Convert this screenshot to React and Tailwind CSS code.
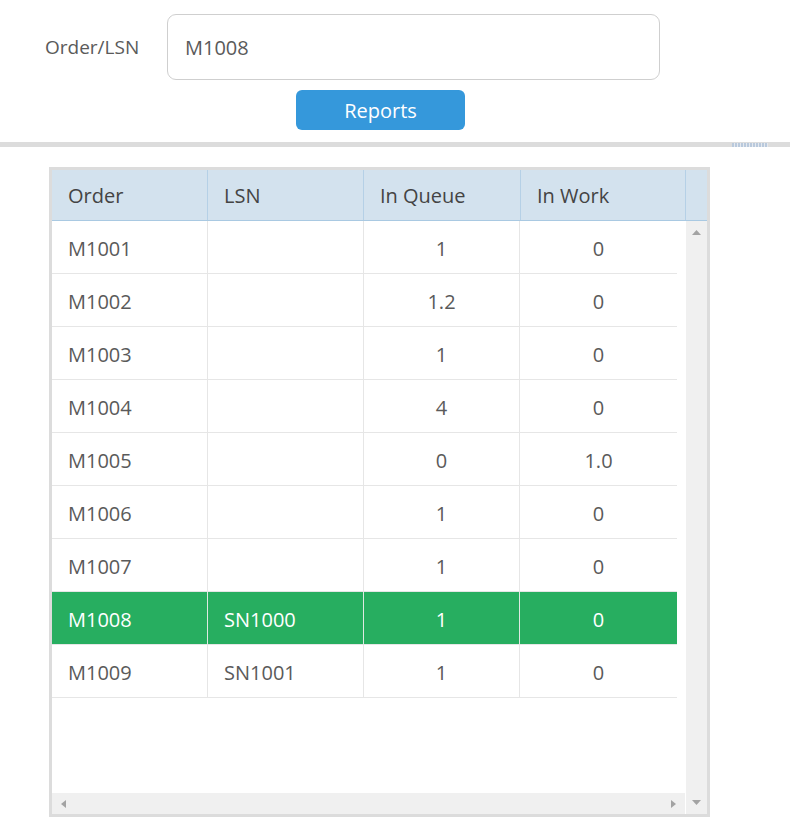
const rows = [
  { order: "M1001", lsn: "", queue: "1", work: "0" },
  { order: "M1002", lsn: "", queue: "1.2", work: "0" },
  { order: "M1003", lsn: "", queue: "1", work: "0" },
  { order: "M1004", lsn: "", queue: "4", work: "0" },
  { order: "M1005", lsn: "", queue: "0", work: "1.0" },
  { order: "M1006", lsn: "", queue: "1", work: "0" },
  { order: "M1007", lsn: "", queue: "1", work: "0" },
  { order: "M1008", lsn: "SN1000", queue: "1", work: "0", selected: true },
  { order: "M1009", lsn: "SN1001", queue: "1", work: "0" },
];

function Row({ row }) {
  const sel = row.selected;
  const cell = sel
    ? "border-r border-[#dfe9e2] h-full flex items-center pt-[3px]"
    : "border-r border-[#e6e6e6] h-full flex items-center pt-[3px]";
  return (
    <div
      className={
        "flex h-[53px] w-[625px] border-b " +
        (sel ? "bg-[#27ae60] text-white border-[#e6e6e6]" : "text-[#5a5a5a] border-[#e6e6e6]")
      }
    >
      <div className={cell + " w-[156px] pl-4"}>{row.order}</div>
      <div className={cell + " w-[156px] pl-4"}>{row.lsn}</div>
      <div className={cell + " w-[156px] justify-center"}>{row.queue}</div>
      <div className="h-full flex items-center justify-center w-[157px] pt-[3px]">{row.work}</div>
    </div>
  );
}

export default function App() {
  return (
    <div
      className="w-[790px] h-[824px] bg-white overflow-hidden text-[20px]"
      style={{ fontFamily: '"Open Sans", "Noto Sans", sans-serif' }}
    >
      <div className="pt-[14px] flex items-center">
        <div className="pl-[45px] w-[167px] text-[19px] text-[#5a5a5a]">Order/LSN</div>
        <div className="w-[493px] h-[66px] border border-[#cfcfcf] rounded-[9px] flex items-center pl-[17px] pt-[2px] text-[#5a5a5a]">
          M1008
        </div>
      </div>
      <div className="pl-[296px] pt-[10px]">
        <button className="w-[169px] h-[40px] rounded-[6px] bg-[#3598db] text-white text-[20px] flex items-center justify-center pt-[1px]">
          Reports
        </button>
      </div>
      <div className="relative mt-[12px] h-[5px] bg-[#dcdcdc]">
        <div className="absolute left-[732px] top-[1px] w-[36px] h-[4px] bg-[repeating-linear-gradient(90deg,#b9c9dc_0_2px,#e4e8ee_2px_3px)]" />
      </div>

      <div className="ml-[49px] mt-[20px] w-[661px] h-[650px] border-[3px] border-[#dcdcdc] flex flex-col">
        <div className="flex h-[51px] bg-[#d3e2ee] border-b border-[#a9c9e2] text-[#444] shrink-0">
          <div className="w-[156px] border-r border-[#b5d0e6] flex items-center pl-4 pt-[1px]">Order</div>
          <div className="w-[156px] border-r border-[#b5d0e6] flex items-center pl-4 pt-[1px]">LSN</div>
          <div className="w-[157px] border-r border-[#b5d0e6] flex items-center pl-4 pt-[1px]">In Queue</div>
          <div className="w-[165px] border-r border-[#b5d0e6] flex items-center pl-4 pt-[1px]">In Work</div>
          <div className="flex-1" />
        </div>
        <div className="flex flex-1">
          <div className="w-[633px] flex flex-col">
            <div className="h-[572px]">
              {rows.map((r) => (
                <Row key={r.order} row={r} />
              ))}
            </div>
            <div className="h-[21px] bg-[#f0f0f0] flex items-center justify-between px-[9px]">
              <svg width="5" height="8" viewBox="0 0 5 8">
                <path d="M5 0 L0 4 L5 8 Z" fill="#a3a3a3" />
              </svg>
              <svg width="5" height="8" viewBox="0 0 5 8">
                <path d="M0 0 L5 4 L0 8 Z" fill="#a3a3a3" />
              </svg>
            </div>
          </div>
          <div className="flex-1 ml-[1px] bg-[#f0f0f0] flex flex-col justify-between items-center py-[9px]">
            <svg width="9" height="5" viewBox="0 0 9 5">
              <path d="M0 5 L4.5 0 L9 5 Z" fill="#a3a3a3" />
            </svg>
            <svg width="9" height="5" viewBox="0 0 9 5">
              <path d="M0 0 L4.5 5 L9 0 Z" fill="#a3a3a3" />
            </svg>
          </div>
        </div>
      </div>
    </div>
  );
}
